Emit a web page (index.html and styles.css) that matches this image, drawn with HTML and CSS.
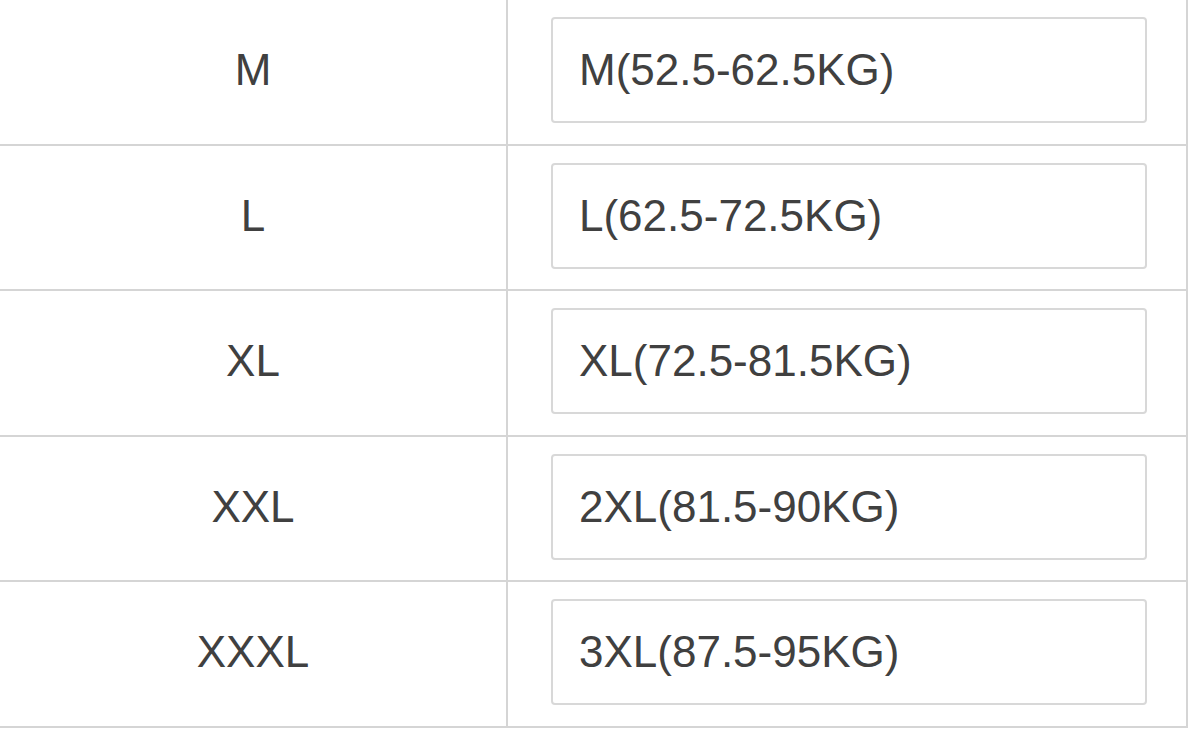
FILE: index.html
```html
<!DOCTYPE html>
<html>
<head>
<meta charset="utf-8">
<link rel="stylesheet" href="styles.css">
</head>
<body>
<div class="size-table">
  <div class="row">
    <div class="cell label">M</div>
    <div class="cell value"><div class="field">M(52.5-62.5KG)</div></div>
  </div>
  <div class="row">
    <div class="cell label">L</div>
    <div class="cell value"><div class="field">L(62.5-72.5KG)</div></div>
  </div>
  <div class="row">
    <div class="cell label">XL</div>
    <div class="cell value"><div class="field">XL(72.5-81.5KG)</div></div>
  </div>
  <div class="row">
    <div class="cell label">XXL</div>
    <div class="cell value"><div class="field">2XL(81.5-90KG)</div></div>
  </div>
  <div class="row">
    <div class="cell label">XXXL</div>
    <div class="cell value"><div class="field">3XL(87.5-95KG)</div></div>
  </div>
</div>
</body>
</html>
```

FILE: styles.css
```css
html, body {
  margin: 0;
  padding: 0;
  background: #ffffff;
}

body {
  font-family: "Liberation Sans", Arial, sans-serif;
  color: #404040;
  overflow: hidden;
}

.size-table {
  width: 1188px;
  display: flex;
  flex-direction: column;
}

.row {
  display: grid;
  grid-template-columns: 508px 680px;
  height: 145.5px;
  box-sizing: border-box;
  border-bottom: 2px solid #d5d5d5;
}

.cell {
  box-sizing: border-box;
  display: flex;
  align-items: center;
}

.label {
  justify-content: center;
  border-right: 2px solid #d5d5d5;
  font-size: 44px;
  padding-bottom: 3px;
}

.value {
  border-right: 2px solid #d5d5d5;
  padding-left: 43px;
}

.field {
  box-sizing: border-box;
  width: 596px;
  height: 106px;
  margin-bottom: 3px;
  border: 2px solid #d8d8d8;
  border-radius: 4px;
  padding-left: 26px;
  display: flex;
  align-items: center;
  font-size: 44px;
}
```
